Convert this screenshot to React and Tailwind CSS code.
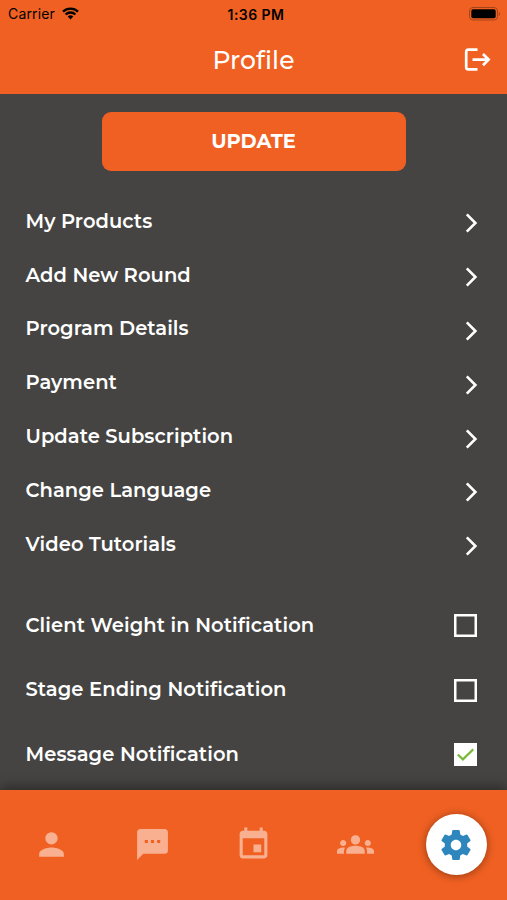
import React, { useState } from 'react';
import { MdPerson, MdTextsms, MdEvent, MdGroups } from 'react-icons/md';

const links = [
  'My Products',
  'Add New Round',
  'Program Details',
  'Payment',
  'Update Subscription',
  'Change Language',
  'Video Tutorials',
];

const notifications = [
  'Client Weight in Notification',
  'Stage Ending Notification',
  'Message Notification',
];

const tabs = [MdPerson, MdTextsms, MdEvent, MdGroups];

const StatusBar = () => (
  <div className="grid h-[27px] grid-cols-3 items-center pl-2 pr-[6px] font-['Inter',sans-serif] text-black">
    <div className="flex items-center gap-[7px]">
      <span className="text-[14px] tracking-[0.15px]">Carrier</span>
      <svg className="h-[13px] w-[17px]" viewBox="0 0 17 13" fill="none" stroke="currentColor" strokeWidth="2.3">
        <path d="M1 4.6a10.7 10.7 0 0 1 15 0" />
        <path d="M3.6 7.5a7 7 0 0 1 9.8 0" />
        <path d="M8.5 12.6 5.7 9.6a4 4 0 0 1 5.6 0z" fill="currentColor" stroke="none" />
      </svg>
    </div>
    <span className="pl-[3px] pt-px text-center text-[14px] font-semibold tracking-[0.45px]">1:36 PM</span>
    <svg className="h-[14px] w-8 justify-self-end" viewBox="0 0 32 14">
      <rect x="0.5" y="0.5" width="28" height="12.5" rx="3.5" fill="none" stroke="#a34419" />
      <rect x="2.3" y="2.3" width="24.4" height="9" rx="1.8" fill="#000" />
      <path d="M29.8 5v4c1.6-.6 1.6-3.4 0-4z" fill="#a34419" />
    </svg>
  </div>
);

const Header = () => (
  <header className="h-[94px] bg-[#f06022]">
    <StatusBar />
    <div className="grid h-[66px] grid-cols-3 items-center pr-4">
      <h1 className="col-start-2 pl-4 pt-px text-center text-[25px] font-medium tracking-[0.1px]">Profile</h1>
      <button className="justify-self-end">
        <svg className="h-6 w-[27px]" viewBox="0 0 27 24" fill="none" stroke="currentColor" strokeWidth="2.7">
          <path d="M13.5 1.7H4.2a2 2 0 0 0-2 2v15.6a2 2 0 0 0 2 2h9.3" />
          <path d="M8.5 11.6h16M19 6l5.6 5.6-5.6 5.6" />
        </svg>
      </button>
    </div>
  </header>
);

const Checkbox = ({ checked, onClick }) => (
  <button onClick={onClick}>
    <svg className="h-[23px] w-[23px]" viewBox="0 0 23 23" fill="none">
      <rect x="1.25" y="1.25" width="20.5" height="20.5" stroke="#fff" strokeWidth="2.5" fill={checked ? '#fff' : 'none'} />
      {checked && <path d="M3.8 11.5l5.1 4.8L19.3 6.2" stroke="#7cb83c" strokeWidth="2.3" />}
    </svg>
  </button>
);

const TabBar = () => (
  <nav className="relative grid h-[110px] grid-cols-5 items-center justify-items-center bg-[#f06022] pb-px pl-px shadow-[0_-3px_12px_rgba(0,0,0,0.4)]">
    {tabs.map((Icon, i) => (
      <Icon key={i} className="h-[37px] w-[37px] text-[#f8b091]" />
    ))}
    <div className="flex h-[61px] w-[61px] items-center justify-center rounded-full bg-white shadow-[0_1px_8px_rgba(0,0,0,0.4)]">
      <svg className="h-9 w-9" viewBox="0 0 24 24" fill="#2f86bd">
        <path d="M19.43 12.98c.04-.32.07-.64.07-.98s-.03-.66-.07-.98l2.11-1.65c.19-.15.24-.42.12-.64l-2-3.46c-.12-.22-.39-.3-.61-.22l-2.49 1c-.52-.4-1.08-.73-1.69-.98l-.38-2.65C14.46 2.18 14.25 2 14 2h-4c-.25 0-.46.18-.49.42l-.38 2.65c-.61.25-1.17.59-1.69.98l-2.49-1c-.23-.09-.49 0-.61.22l-2 3.46c-.13.22-.07.49.12.64l2.11 1.65c-.04.32-.07.65-.07.98s.03.66.07.98l-2.11 1.65c-.19.15-.24.42-.12.64l2 3.46c.12.22.39.3.61.22l2.49-1c.52.4 1.08.73 1.69.98l.38 2.65c.03.24.24.42.49.42h4c.25 0 .46-.18.49-.42l.38-2.65c.61-.25 1.17-.59 1.69-.98l2.49 1c.23.09.49 0 .61-.22l2-3.46c.12-.22.07-.49-.12-.64l-2.11-1.65zM12 15.5c-1.93 0-3.5-1.57-3.5-3.5s1.57-3.5 3.5-3.5 3.5 1.57 3.5 3.5-1.57 3.5-3.5 3.5z" />
      </svg>
    </div>
  </nav>
);

const App = () => {
  const [enabled, setEnabled] = useState([false, false, true]);

  const toggle = (index) => {
    setEnabled(enabled.map((value, i) => (i === index ? !value : value)));
  };

  return (
    <div className="flex h-[900px] w-[507px] flex-col overflow-hidden bg-[#454442] font-['Montserrat','Inter',sans-serif] text-white">
      <Header />
      <main className="flex-1">
        <button className="mx-auto mt-[18px] block h-[59px] w-[304px] rounded-[9px] bg-[#f06022] text-[19.5px] font-bold">
          UPDATE
        </button>

        <div className="mt-6">
          {links.map((label) => (
            <div key={label} className="flex h-[53.8px] items-center justify-between pl-[25.5px] pr-[29px]">
              <span className="pb-px text-[19.5px] font-semibold tracking-[0.05px]">{label}</span>
              <svg className="mt-[3px] h-5 w-[13px]" viewBox="0 0 13 20" fill="none" stroke="currentColor" strokeWidth="2.6">
                <path d="M1.8 1.4l8.6 8.6-8.6 8.6" />
              </svg>
            </div>
          ))}
        </div>

        <div className="mt-[21px]">
          {notifications.map((label, i) => (
            <div key={label} className="flex h-[64.7px] items-center justify-between pl-[25.5px] pr-[30px] pt-px">
              <span className="text-[19.5px] font-semibold tracking-[0.08px]">{label}</span>
              <Checkbox checked={enabled[i]} onClick={() => toggle(i)} />
            </div>
          ))}
        </div>
      </main>
      <TabBar />
    </div>
  );
};

export default App;
